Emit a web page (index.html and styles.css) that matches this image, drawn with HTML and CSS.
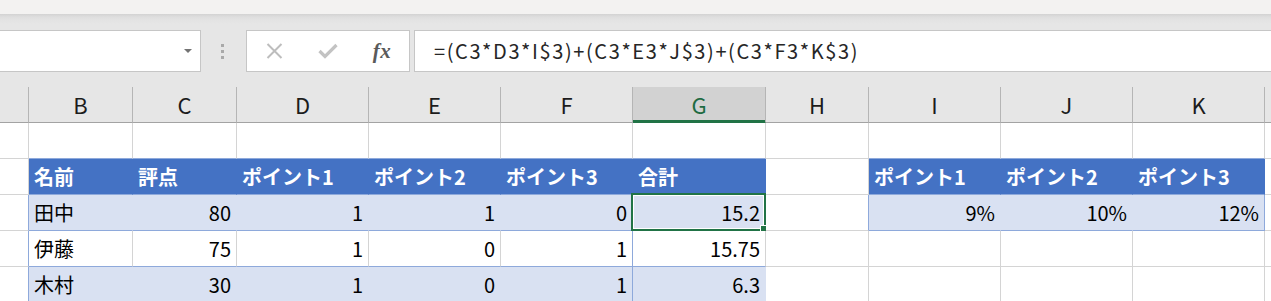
FILE: index.html
```html
<!DOCTYPE html>
<html lang="ja">
<head>
  <meta charset="UTF-8" />
  <title>Sheet1</title>
  <link rel="stylesheet" href="styles.css">
</head>
<body>

  <!-- ribbon edge -->
  <div class="ribbon-edge"></div>

  <!-- formula bar -->
  <div class="formula-bar">
    <div class="name-box"><span class="drop"></span></div>
    <div class="grip"><span></span><span></span><span></span></div>
    <div class="fx-buttons">
      <span class="fx-btn">
        <svg width="17" height="16" viewBox="0 0 17 16"><path d="M1.5 1L15.5 15M15.5 1L1.5 15" stroke="#bdbdbd" stroke-width="2" fill="none"/></svg>
      </span>
      <span class="fx-btn">
        <svg width="20" height="16" viewBox="0 0 20 16"><path d="M1.5 8L7 13.5L18.5 2" stroke="#c3c3c3" stroke-width="3.2" fill="none"/></svg>
      </span>
      <span class="fx-btn fx-label">fx</span>
    </div>
    <div class="formula-input">=(C3*D3*I$3)+(C3*E3*J$3)+(C3*F3*K$3)</div>
  </div>

  <!-- grid -->
  <div class="sheet">
    <!-- column headers -->
    <div class="col-head"></div>
    <div class="col-head">B</div>
    <div class="col-head">C</div>
    <div class="col-head">D</div>
    <div class="col-head">E</div>
    <div class="col-head">F</div>
    <div class="col-head active">G</div>
    <div class="col-head">H</div>
    <div class="col-head">I</div>
    <div class="col-head">J</div>
    <div class="col-head">K</div>
    <div class="col-head"></div>

    <!-- row 2 -->
    <div class="cell"></div>
    <div class="cell above"></div>
    <div class="cell above"></div>
    <div class="cell above"></div>
    <div class="cell above"></div>
    <div class="cell above"></div>
    <div class="cell above"></div>
    <div class="cell"></div>
    <div class="cell above"></div>
    <div class="cell above"></div>
    <div class="cell above"></div>
    <div class="cell"></div>

    <!-- row 3 : table headers -->
    <div class="cell"></div>
    <div class="cell th">名前</div>
    <div class="cell th">評点</div>
    <div class="cell th">ポイント1</div>
    <div class="cell th">ポイント2</div>
    <div class="cell th">ポイント3</div>
    <div class="cell th">合計</div>
    <div class="cell"></div>
    <div class="cell th">ポイント1</div>
    <div class="cell th">ポイント2</div>
    <div class="cell th">ポイント3</div>
    <div class="cell"></div>

    <!-- row 4 -->
    <div class="cell edge"></div>
    <div class="cell band">田中</div>
    <div class="cell band num">80</div>
    <div class="cell band num">1</div>
    <div class="cell band num">1</div>
    <div class="cell band num edge">0</div>
    <div class="cell band num selected">15.2
      <span class="selection"></span>
      <span class="fill-handle"></span>
    </div>
    <div class="cell edge"></div>
    <div class="cell band num">9%</div>
    <div class="cell band num">10%</div>
    <div class="cell band num edge">12%</div>
    <div class="cell"></div>

    <!-- row 5 -->
    <div class="cell edge"></div>
    <div class="cell plain">伊藤</div>
    <div class="cell plain num">75</div>
    <div class="cell plain num">1</div>
    <div class="cell plain num">0</div>
    <div class="cell plain num edge">1</div>
    <div class="cell plain num">15.75</div>
    <div class="cell"></div>
    <div class="cell"></div>
    <div class="cell"></div>
    <div class="cell"></div>
    <div class="cell"></div>

    <!-- row 6 -->
    <div class="cell edge"></div>
    <div class="cell band">木村</div>
    <div class="cell band num">30</div>
    <div class="cell band num">1</div>
    <div class="cell band num">0</div>
    <div class="cell band num edge">1</div>
    <div class="cell band num">6.3</div>
    <div class="cell"></div>
    <div class="cell"></div>
    <div class="cell"></div>
    <div class="cell"></div>
    <div class="cell"></div>
  </div>

</body>
</html>
```

FILE: styles.css
```css
* {
  box-sizing: border-box;
}

body {
  margin: 0;
  background: #ffffff;
  font-family: "Noto Sans CJK JP", "Noto Sans", sans-serif;
  color: #000000;
  overflow: hidden;
}

.ribbon-edge {
  height: 14px;
  background: #f3f2f1;
}

.formula-bar {
  height: 73px;
  background: linear-gradient(to bottom, #d3d3d3 0, #dedede 3px, #e3e3e3 6px, #e6e6e6 10px);
  display: flex;
  align-items: flex-start;
  padding-top: 16px;
}

.name-box {
  width: 202px;
  height: 42px;
  margin-left: -1px;
  background: #ffffff;
  border: 1px solid #c6c6c6;
  display: flex;
  justify-content: flex-end;
  align-items: center;
  padding-right: 8px;
}

.drop {
  width: 0;
  height: 0;
  border-left: 4px solid transparent;
  border-right: 4px solid transparent;
  border-top: 4px solid #737373;
}

.grip {
  width: 45px;
  height: 42px;
  padding-right: 2px;
  display: flex;
  flex-direction: column;
  align-items: center;
  justify-content: center;
  gap: 3px;
}

.grip span {
  width: 3px;
  height: 3px;
  background: #a9a9a9;
}

.fx-buttons {
  width: 164px;
  height: 42px;
  background: #ffffff;
  border: 1px solid #c6c6c6;
  display: flex;
  align-items: center;
}

.fx-btn {
  width: 54px;
  display: flex;
  justify-content: center;
  align-items: center;
}

.fx-label {
  font-family: "Liberation Serif", serif;
  font-style: italic;
  font-weight: bold;
  font-size: 21px;
  color: #5a5a5a;
  letter-spacing: 0.5px;
}

.formula-input {
  flex: 1;
  height: 42px;
  margin-left: 4px;
  margin-right: -2px;
  background: #ffffff;
  border: 1px solid #c6c6c6;
  padding-left: 19px;
  font-size: 20px;
  letter-spacing: 1.6px;
  line-height: 40px;
  color: #262626;
  white-space: nowrap;
}

.sheet {
  display: grid;
  grid-template-columns: 29px 104px 104px 132px 132px 132px 133px 103px 132px 132px 132px 1fr;
  grid-auto-rows: 36px;
}

.col-head {
  background: #e6e6e6;
  border-right: 1px solid #b5b5b5;
  border-bottom: 1px solid #a3a3a3;
  text-align: center;
  font-size: 22px;
  line-height: 35px;
  color: #1c1c1c;
}

.col-head.active {
  background: #d2d2d2;
  color: #1e6b42;
  box-shadow: inset 0 -2px 0 #217346;
  border-bottom-color: #217346;
}

.cell {
  position: relative;
  border-right: 1px solid #d4d4d4;
  border-bottom: 1px solid #d4d4d4;
  padding: 0 5px;
  font-size: 20px;
  line-height: 35px;
  white-space: nowrap;
}

.num {
  text-align: right;
}

.above {
  border-bottom-color: #8ea9db;
}

.th {
  background: #4472c4;
  color: #ffffff;
  font-weight: bold;
  border-right-color: #4472c4;
  border-bottom-color: #8ea9db;
}

.band {
  background: #d9e1f2;
  border-right-color: #d9e1f2;
  border-bottom-color: #8ea9db;
}

.plain {
  border-bottom-color: #8ea9db;
}

.cell.edge {
  border-right-color: #8ea9db;
}

.selection {
  position: absolute;
  left: -2px;
  top: -2px;
  right: -1px;
  bottom: -1px;
  border: 2px solid #217346;
  box-shadow: inset 0 0 0 1px #ffffff;
}

.fill-handle {
  position: absolute;
  right: -2px;
  bottom: -2px;
  width: 7px;
  height: 7px;
  background: #217346;
  border: 1px solid #ffffff;
}
```
